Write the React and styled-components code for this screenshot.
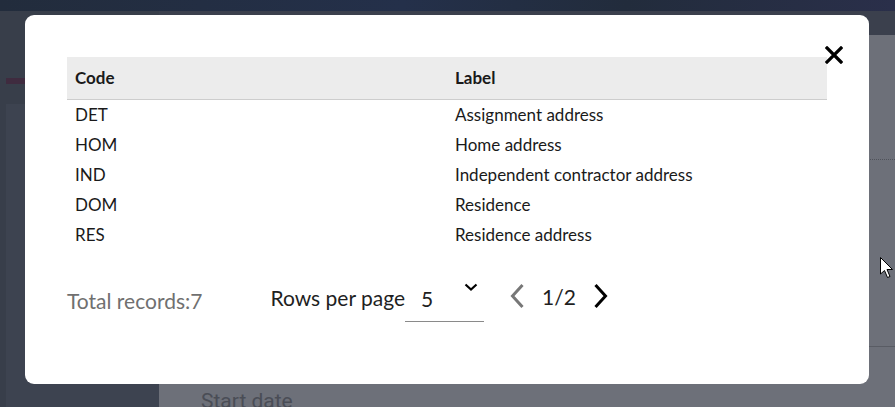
import styled, { createGlobalStyle } from "styled-components";

const GlobalStyle = createGlobalStyle`
	html, body {
		margin: 0;
		padding: 0;
		width: 895px;
		height: 407px;
		overflow: hidden;
		font-family: Lato, "Open Sans", sans-serif;
	}
	* { box-sizing: border-box; }
`;

const rows = [
	{ code: "DET", label: "Assignment address" },
	{ code: "HOM", label: "Home address" },
	{ code: "IND", label: "Independent contractor address" },
	{ code: "DOM", label: "Residence" },
	{ code: "RES", label: "Residence address" },
];

const Page = styled.div`
	width: 895px;
	height: 407px;
	display: flex;
	flex-direction: column;
	background: #3c4250;
	position: relative;
	overflow: hidden;
`;

const TopBar = styled.div`
	height: 11px;
	flex-shrink: 0;
	background: linear-gradient(90deg, #222c3c 0%, #24304a 45%, #222c3c 70%, #2a2f4a 100%);
`;

const Body = styled.div`
	flex: 1;
	display: flex;
	min-height: 0;
`;

const Sidebar = styled.div`
	width: 159px;
	flex-shrink: 0;
	display: flex;
	flex-direction: column;
	padding-top: 67px;
	padding-left: 6px;
	background: #383e4a;
`;

const SidebarMark = styled.div`
	width: 19px;
	height: 6px;
	background: #3f2b3f;
`;

const SidebarPanel = styled.div`
	flex: 1;
	margin-top: 20px;
	background: #3d4350;
`;

const Main = styled.div`
	flex: 1;
	display: flex;
	flex-direction: column;
`;

const MainHeader = styled.div`
	height: 24px;
	flex-shrink: 0;
	background: #3b404d;
`;

const Content = styled.div`
	flex: 1;
	background: #6d7079;
	display: flex;
	flex-direction: column;
	padding-top: 124px;
	overflow: hidden;
`;

const DottedRule = styled.div`
	border-top: 1px dotted #4f525a;
`;

const SolidRule = styled.div`
	margin-top: 186px;
	border-top: 1px solid #595c64;
`;

const FieldLabel = styled.div`
	margin-top: 42px;
	padding-left: 42px;
	font-family: Roboto, sans-serif;
	font-size: 21px;
	line-height: 24px;
	color: #4a4d56;
	white-space: nowrap;
`;

const Modal = styled.div`
	position: absolute;
	left: 25px;
	top: 15px;
	width: 844px;
	height: 369px;
	background: #fff;
	border-radius: 9px;
	padding: 42px;
	display: flex;
	flex-direction: column;
`;

const Close = styled.button`
	position: absolute;
	top: 29px;
	right: 24px;
	width: 22px;
	height: 22px;
	padding: 0;
	border: 0;
	background: none;
	display: flex;
	align-items: center;
	justify-content: center;
`;

const Table = styled.table`
	width: 100%;
	border-collapse: collapse;
	table-layout: fixed;
	color: #1a1a1a;
	font-size: 17px;
`;

const HeadCell = styled.th`
	height: 42px;
	padding: 0 8px;
	text-align: left;
	font-weight: 700;
	background: #ececec;
	border-bottom: 1px solid #cdcdcd;
`;

const Cell = styled.td`
	height: 30px;
	padding: 0 8px;
	vertical-align: middle;
`;

const Footer = styled.div`
	margin-top: 26px;
	display: flex;
	align-items: center;
	height: 44px;
	color: #1f1f1f;
	font-size: 21px;
`;

const Total = styled.span`
	color: #707070;
	font-size: 21px;
	margin-top: 6px;
	margin-right: 68px;
`;

const Select = styled.div`
	width: 79px;
	height: 44px;
	display: flex;
	align-items: center;
	justify-content: space-between;
	padding: 0 6px 0 16px;
	border-bottom: 1px solid #8a8a8a;
	font-size: 21px;
	margin-top: 6px;
`;

const Value = styled.span`
	margin-top: -2px;
`;

const Caret = styled.svg`
	align-self: flex-start;
	margin-top: 5px;
`;

const Pager = styled.div`
	display: flex;
	align-items: center;
	margin-left: 25px;
	gap: 17px;
	font-size: 21px;
	margin-top: -2px;
`;

const Arrow = styled.svg`
	display: block;
`;

const Cursor = styled.svg`
	position: absolute;
	left: 880px;
	top: 257px;
`;

export default function App()
{
	return (
		<Page>
			<GlobalStyle />
			<TopBar />
			<Body>
				<Sidebar>
					<SidebarMark />
					<SidebarPanel />
				</Sidebar>
				<Main>
					<MainHeader />
					<Content>
						<DottedRule />
						<SolidRule />
						<FieldLabel>Start date</FieldLabel>
					</Content>
				</Main>
			</Body>

			<Modal>
				<Close aria-label="Close">
					<svg width="18" height="18" viewBox="0 0 18 18">
						<path d="M2 2 L16 16 M16 2 L2 16" stroke="#000" strokeWidth="3.2" strokeLinecap="square" />
					</svg>
				</Close>
				<Table>
					<thead>
						<tr>
							<HeadCell>Code</HeadCell>
							<HeadCell>Label</HeadCell>
						</tr>
					</thead>
					<tbody>
						{rows.map((r) => (
							<tr key={r.code}>
								<Cell>{r.code}</Cell>
								<Cell>{r.label}</Cell>
							</tr>
						))}
					</tbody>
				</Table>
				<Footer>
					<Total>Total records:7</Total>
					<span>Rows per page</span>
					<Select>
						<Value>5</Value>
						<Caret width="14" height="8" viewBox="0 0 14 8">
							<path d="M1.5 1.5 L7 6.5 L12.5 1.5" fill="none" stroke="#000" strokeWidth="2.2" />
						</Caret>
					</Select>
					<Pager>
						<Arrow width="16" height="26" viewBox="0 0 16 26">
							<path d="M13.5 2 L3.5 13 L13.5 24" fill="none" stroke="#777" strokeWidth="3" />
						</Arrow>
						<span>1/2</span>
						<Arrow width="16" height="26" viewBox="0 0 16 26">
							<path d="M2.5 2 L12.5 13 L2.5 24" fill="none" stroke="#000" strokeWidth="3" />
						</Arrow>
					</Pager>
				</Footer>
			</Modal>

			<Cursor width="14" height="24" viewBox="0 0 14 24">
				<path d="M0.5 0.5 L0.5 17 L4.5 13.5 L7.5 20.5 L10 19.5 L7 12.5 L12.5 12.5 Z" fill="#fff" stroke="#000" strokeWidth="1" />
			</Cursor>
		</Page>
	);
}
